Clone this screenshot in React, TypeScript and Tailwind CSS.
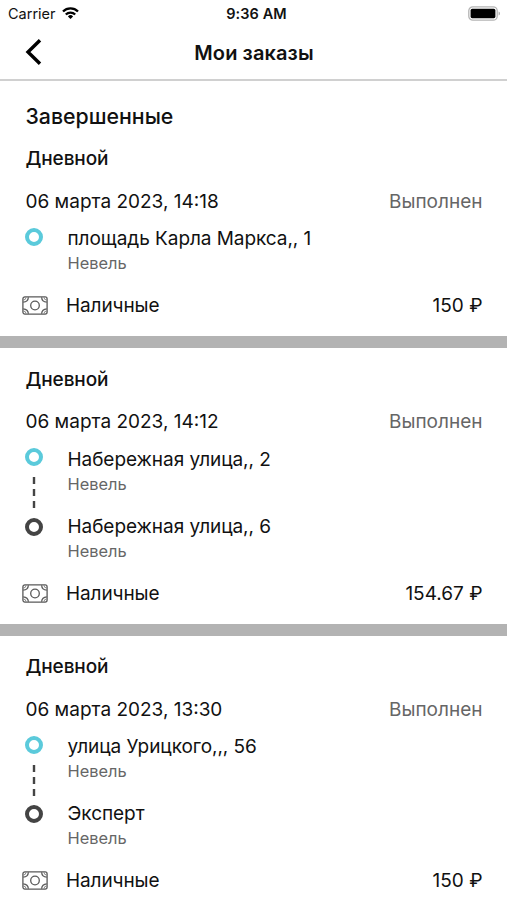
import React from 'react';

type Order = {
  date: string;
  stops: { street: string; city: string }[];
  price: string;
};

const orders: Order[] = [
  {
    date: '06 марта 2023, 14:18',
    stops: [{ street: 'площадь Карла Маркса,, 1', city: 'Невель' }],
    price: '150 ₽',
  },
  {
    date: '06 марта 2023, 14:12',
    stops: [
      { street: 'Набережная улица,, 2', city: 'Невель' },
      { street: 'Набережная улица,, 6', city: 'Невель' },
    ],
    price: '154.67 ₽',
  },
  {
    date: '06 марта 2023, 13:30',
    stops: [
      { street: 'улица Урицкого,,, 56', city: 'Невель' },
      { street: 'Эксперт', city: 'Невель' },
    ],
    price: '150 ₽',
  },
];

function WifiIcon() {
  return (
    <svg viewBox="0 0 17 12" className="w-[17px] h-3 -mt-px" fill="none" stroke="#000" strokeWidth="2.3">
      <path d="M1 4.5a10.6 10.6 0 0 1 15 0" />
      <path d="M3.8 7.5a6.7 6.7 0 0 1 9.4 0" />
      <path d="M8.5 12 5.9 9.4a3.7 3.7 0 0 1 5.2 0z" fill="#000" stroke="none" />
    </svg>
  );
}

function BatteryIcon() {
  return (
    <svg viewBox="0 0 33 15" className="w-[33px] h-[15px] -mt-px">
      <rect x="0.8" y="0.8" width="28.4" height="13.4" rx="4" fill="#fff" stroke="#b4b4b4" strokeWidth="1.3" />
      <rect x="2.6" y="2.8" width="24.8" height="9.4" rx="1.6" fill="#000" />
      <path d="M30.7 5.4c1.5.7 1.5 3.5 0 4.2z" fill="#999" />
    </svg>
  );
}

function CashIcon() {
  return (
    <svg viewBox="0 0 26 19" className="w-[26px] h-[19px]" fill="none" stroke="#5a5a5a" strokeWidth="1.3">
      <rect x="0.9" y="0.9" width="24.2" height="17.2" rx="2" />
      <circle cx="13" cy="9.5" r="4.3" />
      <path d="M6.4 1.2C6.2 4 4.2 6 1.2 6.2M19.6 1.2c.2 2.8 2.2 4.8 5.2 5M6.4 17.8C6.2 15 4.2 13 1.2 12.8M19.6 17.8c.2-2.8 2.2-4.8 5.2-5" />
      <path d="M4 1.4A2.7 2.7 0 0 1 1.4 4M22 1.4A2.7 2.7 0 0 0 24.6 4M4 17.6A2.7 2.7 0 0 0 1.4 15M22 17.6a2.7 2.7 0 0 1 2.6-2.6" strokeWidth="0.7" />
    </svg>
  );
}

function RouteMarks({ double }: { double: boolean }) {
  return (
    <div className="w-[18px] pt-[0.5px] -ml-[0.5px] flex flex-col items-center">
      <span className="size-[18px] shrink-0 rounded-full border-4 border-[#5bcadb]"></span>
      {double && (
        <>
          <svg viewBox="0 0 4 31" className="w-1 h-[31px] mt-[11px] mb-[9.5px]">
            <path d="M2 0v7M2 12v7M2 24v7" stroke="#444" strokeWidth="2.4" />
          </svg>
          <span className="size-[18px] shrink-0 rounded-full border-4 border-[#444]"></span>
        </>
      )}
    </div>
  );
}

function OrderCard({ order }: { order: Order }) {
  return (
    <section className="pl-[25.5px] pr-[24.5px] pt-[20.5px] pb-[18px]">
      <h3 className="h-[22px] leading-[22px] text-[19px] font-medium tracking-[-0.1px]">Дневной</h3>
      <div className="mt-[19.5px] h-6 leading-6 flex justify-between text-[19px]">
        <span>{order.date}</span>
        <span className="text-[#666]">Выполнен</span>
      </div>
      <div className="mt-[13.5px] flex gap-[24.5px]">
        <RouteMarks double={order.stops.length > 1} />
        <div className="flex flex-col gap-5">
          {order.stops.map((stop, i) => (
            <div key={i}>
              <p className="h-6 leading-6 text-[19px] tracking-[-0.06px]">{stop.street}</p>
              <p className="mt-px h-[22px] leading-[22px] text-[16.4px] text-[#666]">{stop.city}</p>
            </div>
          ))}
        </div>
      </div>
      <div className="mt-5 h-6 flex items-center text-[19px] leading-6">
        <span className="-ml-[3.5px] -mt-px mr-[18px]"><CashIcon /></span>
        <span className="tracking-[-0.1px]">Наличные</span>
        <span className="ml-auto">{order.price}</span>
      </div>
    </section>
  );
}

export default function App() {
  return (
    <div className="w-full h-[900px] overflow-hidden bg-white text-[#111] font-['Inter',sans-serif]">
      <div className="h-[27px] pl-[8px] pr-[6px] grid grid-cols-3 items-center text-[14.5px]">
        <div className="flex items-center gap-[6px]">
          <span>Carrier</span>
          <WifiIcon />
        </div>
        <span className="pl-1 text-center font-semibold tracking-[0.1px]">9:36 AM</span>
        <div className="flex justify-end"><BatteryIcon /></div>
      </div>

      <header className="h-[54px] pl-[25px] pr-[25px] grid grid-cols-[20px_1fr_20px] items-center border-b-2 border-[#d0d0d0]">
        <svg viewBox="0 0 17 26" className="w-[17px] h-[26px] -mt-[2px]" fill="none" stroke="#000" strokeWidth="3.4">
          <path d="M15 1.2 3 13l12 11.8" />
        </svg>
        <h1 className="pl-px text-center text-[20px] leading-6 font-semibold tracking-[0.1px]">Мои заказы</h1>
      </header>

      <h2 className="h-[46.5px] pt-[22.5px] pl-[25.5px] text-[21.3px] leading-6 font-medium">Завершенные</h2>

      {orders.map((order, i) => (
        <React.Fragment key={order.date}>
          {i > 0 && <div className="h-3 bg-[#b3b3b3]"></div>}
          <OrderCard order={order} />
        </React.Fragment>
      ))}
    </div>
  );
}
